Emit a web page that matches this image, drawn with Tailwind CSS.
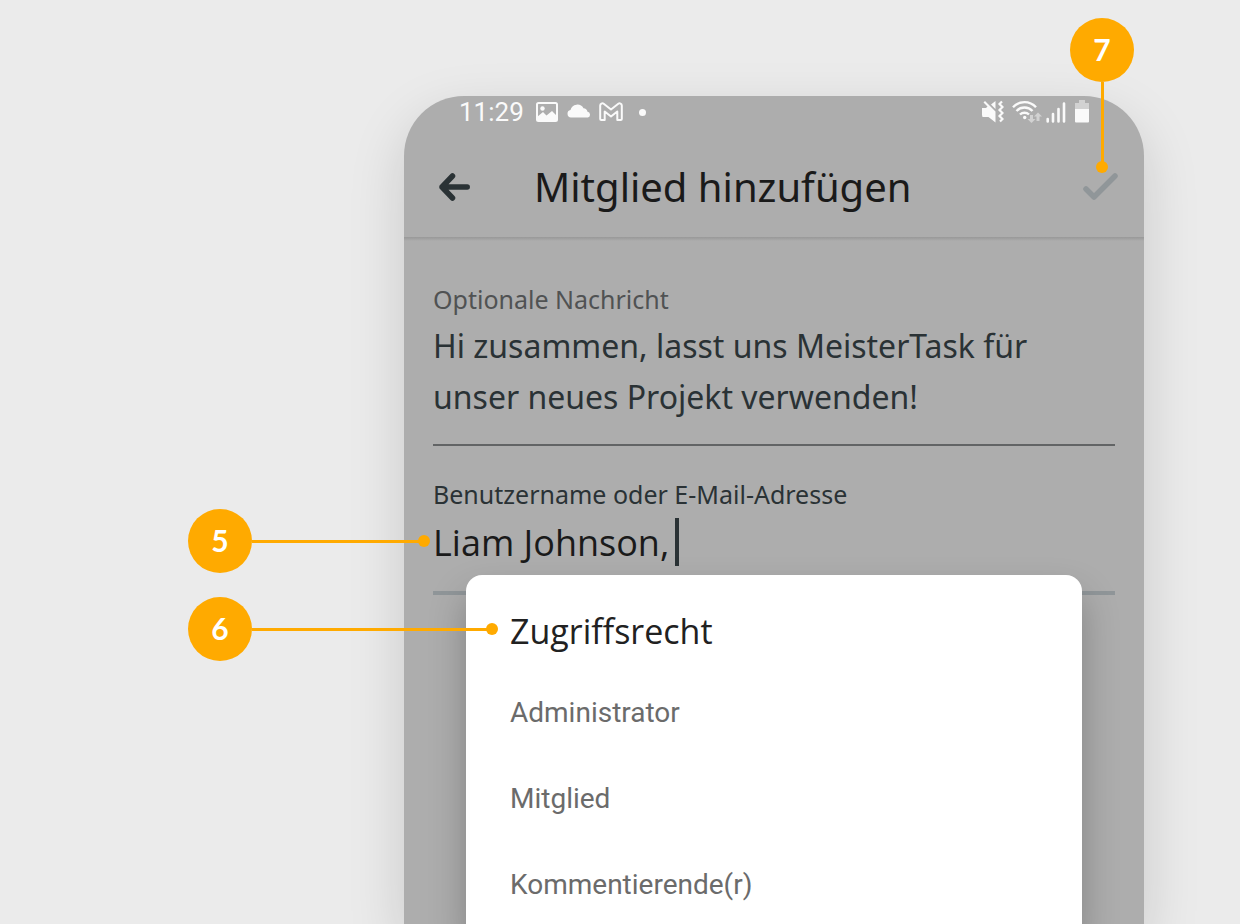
<!DOCTYPE html>
<html lang="de">
<head>
<meta charset="utf-8">
<meta name="viewport" content="width=device-width, initial-scale=1">
<title>Mitglied hinzufügen</title>
<script src="https://cdn.jsdelivr.net/npm/@tailwindcss/browser@4"></script>
</head>
<body class="bg-[#ebebeb]">
<div class="flex h-screen flex-col overflow-hidden pt-24 pr-24">
  <main class="ml-auto flex w-full max-w-[740px] flex-1 flex-col rounded-t-[60px] bg-[#adadad] font-['Noto_Sans','Open_Sans',sans-serif] shadow-[0_20px_56px_rgba(0,0,0,0.15)]">

    <!-- Status bar -->
    <div class="flex h-8 items-center justify-between pr-[54px] pl-[55px] text-[#fafafa]">
      <div class="flex items-center gap-2">
        <span class="mr-[3px] font-['Roboto',sans-serif] text-[26px] leading-8">11:29</span>
        <svg class="h-6 w-6" viewBox="0 0 24 24" fill="none"><rect x="2" y="3" width="20" height="18" rx="1.5" stroke="currentColor" stroke-width="2"/><circle cx="7.500" cy="8.500" r="2.200" fill="currentColor"/><path d="M2 17l6-5 3.500 3.500L17 11l5 5v5H2z" fill="currentColor"/></svg>
        <svg class="h-6 w-6" viewBox="0 0 24 24" fill="currentColor"><path d="M4 17.500A3.800 3.800 0 0 1 3.500 10 7 7 0 0 1 16.500 8.300 4.500 4.500 0 0 1 20.500 11.700 3 3 0 0 1 21 17.500z"/></svg>
        <svg class="h-6 w-6" viewBox="0 0 24 24" fill="none" stroke="currentColor" stroke-width="2" stroke-linejoin="round"><path d="M1.200 5.500a2.200 2.200 0 0 1 3.500-1.700L12 9.500l7.300-5.700a2.200 2.200 0 0 1 3.500 1.700V19a1 1 0 0 1-1 1h-3.500v-8.500L12 16.500l-6.300-5V20H2.200a1 1 0 0 1-1-1z"/></svg>
        <span class="mx-2 h-[7px] w-[7px] rounded-full bg-current"></span>
      </div>
      <div class="flex items-center gap-1">
        <svg class="h-6 w-6" viewBox="0 0 24 24"><path d="M2 8h4l1.500-1.500L3.500 2.500 5 1l10.500 10.500v11L8.500 17H2.500L2 15zM11 4.500 15.500 1v8z" fill="currentColor"/><path d="M22 1.500l-2.500 2.500 3 3-3 3 3 3-3 3 3 3-2.500 2.500" fill="none" stroke="currentColor" stroke-width="2.200"/></svg>
        <svg class="ml-1 h-6 w-[30px]" viewBox="0 0 30 24" fill="none"><g stroke="currentColor" stroke-width="2.400"><path d="M1 7.200a15.500 15.500 0 0 1 23 0M4.500 11a11 11 0 0 1 16 0M8 14.500a6.500 6.500 0 0 1 9 0"/></g><circle cx="12.700" cy="17.500" r="1.700" fill="currentColor"/><g fill="#d2d2d2"><path d="M18 15h3v4h2.500L19.500 23l-4-4H18zM24.500 21v-4.500H22l4-4 4 4h-2.500V21z"/></g></svg>
        <svg class="h-6 w-5" viewBox="0 0 20 24" fill="none" stroke="currentColor" stroke-width="2.600" stroke-linecap="round"><path d="M1.700 19v2.500M7 14v7.500M12.500 9v12.500M18 3.500v18"/></svg>
        <svg class="ml-1 h-6 w-4" viewBox="0 0 16 24"><path d="M5 0h6v3h4v7H1V3h4z" fill="#d2d2d2"/><path d="M1 9h14v12.500a1 1 0 0 1-1 1H2a1 1 0 0 1-1-1z" fill="currentColor"/></svg>
      </div>
    </div>

    <!-- Toolbar -->
    <header class="flex h-[109px] items-center pr-[22px] pb-1 pl-[34px]">
      <button type="button" aria-label="Zurück" class="mt-3">
        <svg class="h-8 w-8" viewBox="0 0 32 32" fill="none" stroke="#2a3235" stroke-width="5.500" stroke-linecap="round" stroke-linejoin="round"><path d="M4 16h25.200M14.500 5L4 16l10.500 11"/></svg>
      </button>
      <h1 class="mt-3 ml-16 text-[40px] leading-14 text-[#1a1a1a]">Mitglied hinzufügen</h1>
      <button type="button" aria-label="Bestätigen" class="relative mt-3 ml-auto">
        <svg class="h-9 w-10" viewBox="0 0 40 36" fill="none" stroke="#909699" stroke-width="5.500" stroke-linecap="round" stroke-linejoin="round"><path d="M4 20l8 8L33 7"/></svg>
        <!-- Callout 7 -->
        <span class="absolute bottom-8 left-1/2 flex -translate-x-1/2 flex-col items-center">
          <span class="flex size-16 items-center justify-center rounded-full bg-[#ffaa00] pb-px font-['Lato',sans-serif] text-[30px] font-bold text-white">7</span>
          <span class="h-20 w-[3px] bg-[#ffaa00]"></span>
          <span class="-mt-px size-3 rounded-full bg-[#ffaa00]"></span>
        </span>
      </button>
    </header>
    <div class="h-1 bg-linear-to-b from-[#989898] to-[#adadad]"></div>

    <form class="flex flex-col px-[29px] pt-10">
      <label for="msg" class="text-[25px] leading-9 text-[#505253]">Optionale Nachricht</label>
      <textarea id="msg" rows="2" class="block resize-none overflow-hidden border-b-2 border-[#626465] pt-[3px] pb-[22px] text-[32px] leading-[51px] text-[#2a3235] outline-none">Hi zusammen, lasst uns MeisterTask für unser neues Projekt verwenden!</textarea>
      <label for="user" class="mt-[30px] text-[25px] leading-9 text-[#2a3235]">Benutzername oder E-Mail-Adresse</label>
      <div class="relative flex items-center border-b-4 border-[#909699] pt-[5px] pb-6">
        <input id="user" type="text" value="Liam Johnson, " class="field-sizing-content h-[50px] font-['Open_Sans',sans-serif] text-4xl text-[#1a1a1a] outline-none">
        <span class="-ml-1 h-12 w-1 bg-[#2a3235]"></span>
        <!-- Callout 5 -->
        <span class="absolute -top-[3px] right-full flex items-center pr-[3px]">
          <span class="flex size-16 items-center justify-center rounded-full bg-[#ffaa00] pb-px font-['Lato',sans-serif] text-[30px] font-bold text-white">5</span>
          <span class="h-[3px] w-[167px] bg-[#ffaa00]"></span>
          <span class="-ml-px size-3 rounded-full bg-[#ffaa00]"></span>
        </span>
      </div>
    </form>

    <!-- Role dialog -->
    <section role="dialog" aria-labelledby="role" class="relative -mt-5 mr-[62px] ml-[62px] flex flex-1 flex-col rounded-t-2xl bg-white px-11 pt-8 shadow-[0_20px_36px_rgba(0,0,0,0.25)]">
      <div class="relative">
        <h2 id="role" class="font-['Open_Sans',sans-serif] text-[34px] leading-12 text-[#212121]">Zugriffsrecht</h2>
        <!-- Callout 6 -->
        <span class="absolute top-[-10px] right-full flex items-center pr-3">
          <span class="flex size-16 items-center justify-center rounded-full bg-[#ffaa00] pb-px font-['Lato',sans-serif] text-[30px] font-bold text-white">6</span>
          <span class="h-[3px] w-[235px] bg-[#ffaa00]"></span>
          <span class="-ml-px size-3 rounded-full bg-[#ffaa00]"></span>
        </span>
      </div>
      <ul class="mt-[15px] font-['Roboto',sans-serif] text-[28px] text-[#6b6b6b]">
        <li><button type="button" class="block h-[86px] w-full text-left">Administrator</button></li>
        <li><button type="button" class="block h-[86px] w-full text-left">Mitglied</button></li>
        <li><button type="button" class="block h-[86px] w-full text-left">Kommentierende(r)</button></li>
      </ul>
    </section>
  </main>
</div>
</body>
</html>
